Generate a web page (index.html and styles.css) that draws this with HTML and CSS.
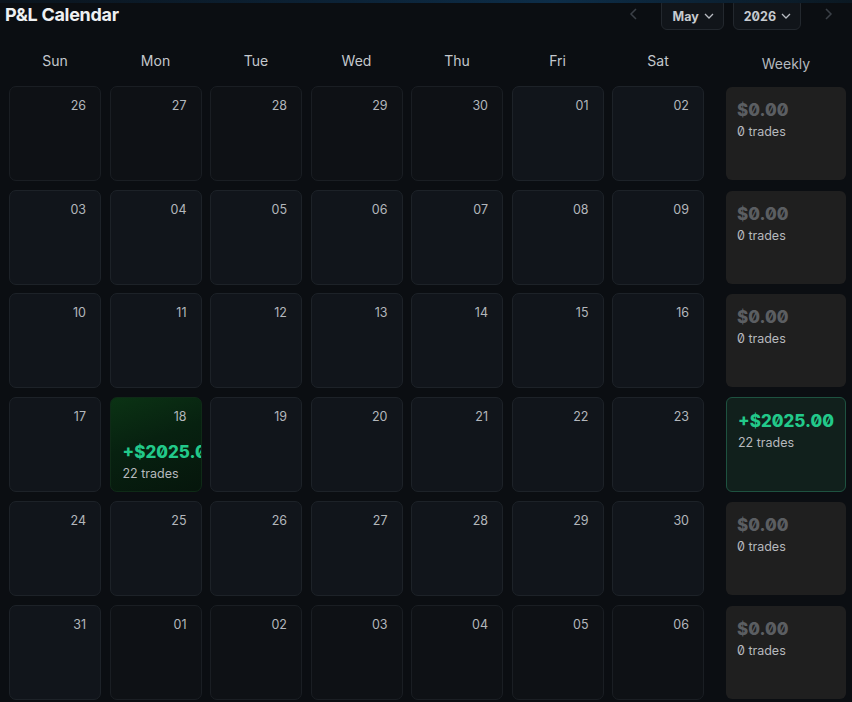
FILE: index.html
```html
<!DOCTYPE html>
<html>
<head>
<meta charset="utf-8">
<link rel="stylesheet" href="styles.css">
</head>
<body>
<div class="topglow"></div>
<div class="panel">
  <header class="head">
    <h1 class="title">P&amp;L Calendar</h1>
    <div class="nav">
      <span class="arrow"><svg width="10" height="14" viewBox="0 0 10 14"><path d="M7 2 L2 7 L7 12" fill="none" stroke="currentColor" stroke-width="1.5"/></svg></span>
      <button class="sel">May <svg width="10" height="6" viewBox="0 0 10 6"><path d="M1 1 L5 5 L9 1" fill="none" stroke="currentColor" stroke-width="1.3"/></svg></button>
      <button class="sel">2026 <svg width="10" height="6" viewBox="0 0 10 6"><path d="M1 1 L5 5 L9 1" fill="none" stroke="currentColor" stroke-width="1.3"/></svg></button>
      <span class="arrow right"><svg width="10" height="14" viewBox="0 0 10 14"><path d="M3 2 L8 7 L3 12" fill="none" stroke="currentColor" stroke-width="1.5"/></svg></span>
    </div>
  </header>
  <div class="grid">
    <div class="dow">Sun</div><div class="dow">Mon</div><div class="dow">Tue</div><div class="dow">Wed</div><div class="dow">Thu</div><div class="dow">Fri</div><div class="dow">Sat</div><div class="dow wk">Weekly</div>

    <div class="day other"><span class="num">26</span></div>
    <div class="day other"><span class="num">27</span></div>
    <div class="day other"><span class="num">28</span></div>
    <div class="day other"><span class="num">29</span></div>
    <div class="day other"><span class="num">30</span></div>
    <div class="day"><span class="num">01</span></div>
    <div class="day"><span class="num">02</span></div>
    <div class="week"><div class="amt zero">$0.00</div><div class="trades">0 trades</div></div>

    <div class="day"><span class="num">03</span></div>
    <div class="day"><span class="num">04</span></div>
    <div class="day"><span class="num">05</span></div>
    <div class="day"><span class="num">06</span></div>
    <div class="day"><span class="num">07</span></div>
    <div class="day"><span class="num">08</span></div>
    <div class="day"><span class="num">09</span></div>
    <div class="week"><div class="amt zero">$0.00</div><div class="trades">0 trades</div></div>

    <div class="day"><span class="num">10</span></div>
    <div class="day"><span class="num">11</span></div>
    <div class="day"><span class="num">12</span></div>
    <div class="day"><span class="num">13</span></div>
    <div class="day"><span class="num">14</span></div>
    <div class="day"><span class="num">15</span></div>
    <div class="day"><span class="num">16</span></div>
    <div class="week"><div class="amt zero">$0.00</div><div class="trades">0 trades</div></div>

    <div class="day"><span class="num">17</span></div>
    <div class="day win"><span class="num">18</span><div class="amt pos">+$2025.00</div><div class="trades">22 trades</div></div>
    <div class="day"><span class="num">19</span></div>
    <div class="day"><span class="num">20</span></div>
    <div class="day"><span class="num">21</span></div>
    <div class="day"><span class="num">22</span></div>
    <div class="day"><span class="num">23</span></div>
    <div class="week winwk"><div class="amt pos">+$2025.00</div><div class="trades">22 trades</div></div>

    <div class="day"><span class="num">24</span></div>
    <div class="day"><span class="num">25</span></div>
    <div class="day"><span class="num">26</span></div>
    <div class="day"><span class="num">27</span></div>
    <div class="day"><span class="num">28</span></div>
    <div class="day"><span class="num">29</span></div>
    <div class="day"><span class="num">30</span></div>
    <div class="week"><div class="amt zero">$0.00</div><div class="trades">0 trades</div></div>

    <div class="day"><span class="num">31</span></div>
    <div class="day other"><span class="num">01</span></div>
    <div class="day other"><span class="num">02</span></div>
    <div class="day other"><span class="num">03</span></div>
    <div class="day other"><span class="num">04</span></div>
    <div class="day other"><span class="num">05</span></div>
    <div class="day other"><span class="num">06</span></div>
    <div class="week"><div class="amt zero">$0.00</div><div class="trades">0 trades</div></div>
  </div>
</div>
</body>
</html>
```
FILE: styles.css
```css
html, body {
  margin: 0;
  padding: 0;
  background: #0b0e12;
  height: 702px;
  overflow: hidden;
}
body {
  font-family: "Inter", "Noto Sans", "Liberation Sans", sans-serif;
  color: #c9cdd2;
}
.topglow {
  position: fixed;
  top: 0;
  left: 0;
  right: 0;
  height: 3px;
  background: linear-gradient(90deg, #0b141d 0%, #0c2236 40%, #0d2d48 65%, #0b1822 100%);
  z-index: 5;
}
.panel {
  padding: 0 6px 0 9px;
}
.head {
  display: flex;
  justify-content: space-between;
  align-items: flex-start;
  height: 52px;
  margin-left: -4px;
}
.title {
  margin: 4px 0 0;
  font-size: 18px;
  font-weight: 700;
  letter-spacing: -0.3px;
  color: #eef0f2;
}
.nav {
  display: flex;
  align-items: center;
  margin-top: -2px;
  margin-right: 8px;
}
.arrow {
  color: #3b4047;
  display: flex;
  width: 20px;
  justify-content: center;
  margin-right: 17px;
}
.arrow.right {
  margin: 0 0 0 17px;
}
.sel {
  display: flex;
  align-items: center;
  gap: 5px;
  height: 32px;
  padding: 4px 9px 0 10px;
  background: #11151a;
  border: 1px solid #23282e;
  border-radius: 6px;
  color: #c7cbd0;
  font-family: "Inter", "Noto Sans", "Liberation Sans", sans-serif;
  font-size: 12.5px;
  font-weight: 700;
  font-feature-settings: "zero" 1;
  margin-right: 9px;
}
.sel:nth-of-type(2) { margin-right: 0; }
.sel svg { color: #b8bcc2; }

.grid {
  display: grid;
  grid-template-columns: repeat(7, 92px) 133.5px;
  grid-template-rows: 25px repeat(6, 95px);
  column-gap: 8.5px;
  row-gap: 8.8px;
}
.dow {
  text-align: center;
  font-size: 14px;
  line-height: 17px;
  color: #c4c8cd;
}
.dow.wk {
  margin-left: 13.5px;
  padding-top: 3px;
  color: #b5b9be;
}
.day {
  border: 1px solid #1d2228;
  border-radius: 7px;
  background: #11151b;
  box-sizing: border-box;
  padding: 12px 14px 0 12px;
  overflow: hidden;
  display: flex;
  flex-direction: column;
}
.day.other {
  background: #0e1115;
  border-color: #1a1e23;
}
.num {
  align-self: flex-end;
  font-size: 12.5px;
  color: #b3b7bc;
  line-height: 14px;
}
.week {
  margin-left: 13.5px;
  background: #1f1f1f;
  border-radius: 6px;
  padding: 13px 11px 0;
  box-sizing: border-box;
  height: 93px;
  margin-top: 1px;
}
.amt {
  font-size: 17px;
  font-weight: 800;
  letter-spacing: 0;
  font-feature-settings: "zero" 1;
  white-space: nowrap;
  line-height: 20px;
}
.amt.zero { color: #5b5e62; }
.amt.pos { color: #22c98a; }
.trades {
  font-size: 12.5px;
  color: #b6b9bd;
  font-feature-settings: "zero" 1;
  margin-top: 4px;
}
.day.win {
  background: linear-gradient(160deg, #0b3314 0%, #072110 45%, #06160c 100%);
  border-color: #0f2a17;
}
.day.win .amt {
  margin-top: 18px;
}
.week.winwk {
  background: #11201c;
  border: 1px solid #1e5240;
  height: 95px;
  margin-top: 0;
  padding-top: 13px;
}
```
